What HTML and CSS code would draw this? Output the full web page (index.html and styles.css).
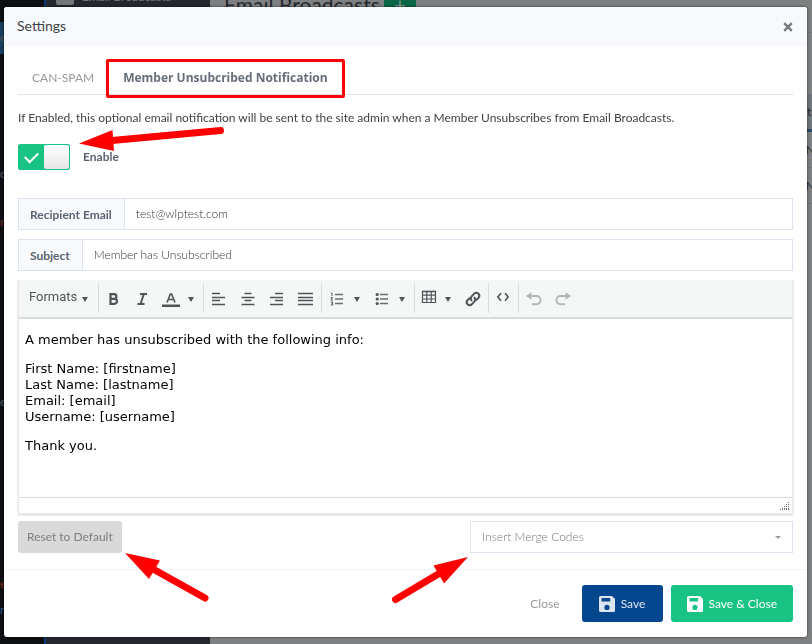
FILE: index.html
```html
<!DOCTYPE html>
<html lang="en">
<head>
<meta charset="utf-8">
<title>Settings</title>
<link rel="stylesheet" href="styles.css">
</head>
<body>
<div class="page" aria-hidden="true">
  <div class="rail">
    <div class="rail-item rail-active">e</div>
    <div class="rail-item rail-c">c</div>
    <div class="rail-item rail-m">m</div>
    <div class="rail-item rail-e">e</div>
    <div class="rail-item rail-red">e</div>
    <div class="rail-item rail-blue">m</div>
  </div>
  <div class="subnav"><span class="subnav-icon"></span><span>Email Broadcasts</span></div>
  <div class="main">
    <div class="page-head"><span>Email Broadcasts</span><span class="add">+</span></div>
    <div class="grid-head">tu</div>
    <div class="grid-row">N</div>
    <div class="grid-row">N</div>
  </div>
</div>

<div class="dialog" role="dialog" aria-labelledby="title">
  <header class="dialog-head">
    <h1 id="title">Settings</h1>
    <button class="close-x" type="button" aria-label="Close dialog"><svg width="10" height="10" viewBox="0 0 10 10"><path d="M1.2 1.2 8.8 8.8M8.8 1.2 1.2 8.8" stroke="#777b80" stroke-width="2.4"/></svg></button>
  </header>

  <div class="dialog-body">
    <nav class="tabs">
      <a class="tab" href="#can-spam">CAN-SPAM</a>
      <a class="tab tab-active" href="#unsubscribed">Member Unsubcribed Notification</a>
    </nav>
    <p class="intro">If Enabled, this optional email notification will be sent to the site admin when a Member Unsubscribes from Email Broadcasts.</p>

    <div class="toggle-row">
      <input class="toggle" type="checkbox" id="enable" checked>
      <label for="enable">Enable</label>
    </div>

    <div class="field"><label for="recipient">Recipient Email</label><input id="recipient" type="text" value="test@wlptest.com"></div>
    <div class="field"><label for="subject">Subject</label><input id="subject" type="text" value="Member has Unsubscribed"></div>

    <div class="editor">
      <div class="toolbar">
        <div class="group g-formats"><button type="button" class="formats">Formats <i class="caret"></i></button></div>
        <div class="group g-text">
          <button type="button" aria-label="Bold"><svg width="16" height="16" viewBox="0 0 16 16"><path d="M4.500 3.2h3.6a2.3 2.3 0 0 1 0 4.6H4.500zM4.500 7.8h4a2.5 2.5 0 0 1 0 5h-4z" fill="none" stroke="#515357" stroke-width="2.2"/></svg></button>
          <button type="button" aria-label="Italic"><svg width="16" height="16" viewBox="0 0 16 16"><path d="M6 3h7M3.5 13h7M9.8 3 6.600 13" fill="none" stroke="#515357" stroke-width="2"/></svg></button>
          <button type="button" aria-label="Text color"><svg width="18" height="16" viewBox="0 0 18 16"><path d="M5 11.500 8.4 3h1.2L13 11.500M6.3 8.500h5.4" fill="none" stroke="#515357" stroke-width="1.6"/><path d="M0 13.500h18V16H0z" fill="#515357"/></svg></button>
          <button type="button" class="drop" aria-label="Choose color"><i class="caret"></i></button>
        </div>
        <div class="group g-align">
          <button type="button" aria-label="Align left"><svg width="16" height="14" viewBox="0 0 16 14"><path d="M1 1.500h8M1 5.500h13M1 8.500h8M1 12.500h13" stroke="#515357" stroke-width="1.6"/></svg></button>
          <button type="button" aria-label="Align center"><svg width="16" height="14" viewBox="0 0 16 14"><path d="M4.500 1.500h7M1.500 5.500h13M4.500 8.500h7M1.500 12.500h13" stroke="#515357" stroke-width="1.6"/></svg></button>
          <button type="button" aria-label="Align right"><svg width="16" height="14" viewBox="0 0 16 14"><path d="M6 1.500h8M1 5.500h13M6 8.500h8M1 12.500h13" stroke="#515357" stroke-width="1.6"/></svg></button>
          <button type="button" aria-label="Justify"><svg width="16" height="14" viewBox="0 0 16 14"><path d="M0 1.500h15M0 5.500h15M0 8.500h15M0 12.500h15" stroke="#515357" stroke-width="1.6"/></svg></button>
        </div>
        <div class="group g-lists">
          <button type="button" aria-label="Numbered list"><svg width="14" height="14" viewBox="0 0 14 14"><path d="M5 2.5h8M5 7h8M5 11.5h8" stroke="#696b6f" stroke-width="1.3"/><path d="M1 1.2h1V4M.8 5.600h1.8L.8 8h2M.8 10h2l-1 1.4h1v1.5h-2" fill="none" stroke="#515357"/></svg></button>
          <button type="button" class="drop" aria-label="Number styles"><i class="caret"></i></button>
          <button type="button" aria-label="Bullet list"><svg width="14" height="14" viewBox="0 0 14 14"><path d="M5 2.5h8M5 7h8M5 11.5h8" stroke="#696b6f" stroke-width="1.3"/><circle cx="2.2" cy="2.5" r="1.6" fill="#515357"/><circle cx="2.2" cy="7" r="1.6" fill="#515357"/><circle cx="2.2" cy="11.5" r="1.6" fill="#515357"/></svg></button>
          <button type="button" class="drop" aria-label="Bullet styles"><i class="caret"></i></button>
        </div>
        <div class="group g-table">
          <button type="button" class="high" aria-label="Table"><svg width="16" height="14" viewBox="0 0 16 14"><path d="M1.5 1.5h13v11h-13zM1.5 5.2h13M1.5 9h13M5.800 1v12M10.2 1v12" fill="none" stroke="#515357" stroke-width="1.2"/><path d="M1 1.5h14" stroke="#515357" stroke-width="1.6"/></svg></button>
          <button type="button" class="drop" aria-label="Table options"><i class="caret"></i></button>
          <button type="button" aria-label="Link"><svg width="18" height="18" viewBox="0 0 18 18"><g fill="none" stroke="#515357" stroke-width="2" stroke-linecap="round"><path d="M7.600 10.4a2.8 2.8 0 0 1 0-4l2.900-3a3 3 0 0 1 4.200 4.200l-2.200 2.200"/><path d="M10.4 7.600a2.800 2.800 0 0 1 0 4l-2.900 3a3 3 0 0 1-4.200-4.200l2.200-2.200"/></g></svg></button>
        </div>
        <div class="group g-code"><button type="button" class="high" aria-label="Source code"><svg width="14" height="10" viewBox="0 0 14 10"><path d="M5 1.2 1.8 5 5 8.8M9 1.2 12.2 5 9 8.8" fill="none" stroke="#515357" stroke-width="1.6"/></svg></button></div>
        <div class="group">
          <button type="button" aria-label="Undo" disabled><svg width="16" height="14" viewBox="0 0 16 14"><path d="M3 4h7.5a4 4 0 0 1 0 8.2H6" fill="none" stroke="#b3b5b6" stroke-width="1.9"/><path d="M0 4 5.5.2v7.6z" fill="#b3b5b6"/></svg></button>
          <button type="button" aria-label="Redo" disabled><svg width="16" height="14" viewBox="0 0 16 14"><path d="M13 4H5.5a4 4 0 0 0 0 8.2H10" fill="none" stroke="#b3b5b6" stroke-width="1.9"/><path d="M16 4 10.5.2v7.6z" fill="#b3b5b6"/></svg></button>
        </div>
      </div>
      <div class="content" contenteditable="true" role="textbox" aria-label="Message" spellcheck="false">
        <p>A member has unsubscribed with the following info:</p>
        <p>First Name: [firstname]<br>Last Name: [lastname]<br>Email: [email]<br>Username: [username]</p>
        <p>Thank you.</p>
      </div>
      <div class="statusbar"><svg width="10" height="10" viewBox="0 0 10 10" fill="#6c6e70"><path d="M8 1h1v1H8zM6 3h1v1H6zM8 3h1v1H8zM4 5h1v1H4zM6 5h1v1H6zM8 5h1v1H8zM2 7h1v2H2zM4 7h1v2H4zM6 7h1v2H6zM8 7h1v2H8zM0 8h1v1H0z"/></svg></div>
    </div>

    <div class="under">
      <button type="button" class="btn reset">Reset to Default</button>
      <div class="merge"><select aria-label="Merge codes"><option>Insert Merge Codes</option></select></div>
    </div>
  </div>

  <footer class="dialog-foot">
    <button type="button" class="btn plain">Close</button>
    <button type="button" class="btn save"><svg width="16" height="16" viewBox="0 0 16 16"><path fill-rule="evenodd" d="M1.500 0h11.500L16 3v11.500a1.500 1.500 0 0 1-1.500 1.500h-13A1.500 1.500 0 0 1 0 14.500v-13A1.500 1.500 0 0 1 1.500 0zM2.500 2v3.400h8.700V2zM8 8.800a2.600 2.600 0 1 0 0 5.200 2.600 2.600 0 0 0 0-5.200z" fill="#dde5f0"/></svg>Save</button>
    <button type="button" class="btn save-close"><svg width="16" height="16" viewBox="0 0 16 16"><path fill-rule="evenodd" d="M1.500 0h11.500L16 3v11.500a1.500 1.500 0 0 1-1.500 1.500h-13A1.500 1.500 0 0 1 0 14.500v-13A1.500 1.500 0 0 1 1.500 0zM2.500 2v3.400h8.700V2zM8 8.800a2.600 2.600 0 1 0 0 5.200 2.600 2.600 0 0 0 0-5.200z" fill="#fff"/></svg>Save &amp; Close</button>
  </footer>
</div>

<svg class="arrows" width="812" height="644" viewBox="0 0 812 644" aria-hidden="true">
  <g stroke="#f00" stroke-width="7" stroke-linecap="round"><path d="M220.500 130.500 112 140.500"/><path d="M205 598 153 569"/><path d="M395.500 599.500 440 573"/></g>
  <g fill="#f00"><path d="M79 143.500 112.500 130l1.500 21z"/><path d="M125 553l35 7.500-11 18.500z"/><path d="M468 557l-34.500 8.500 10.500 18z"/></g>
</svg>
</body>
</html>
```

FILE: styles.css
```css
* { box-sizing: border-box; }
body {
  margin: 0;
  min-height: 100vh;
  overflow: hidden;
  background: #7f8081;
  color: #3f4348;
  font: 12px/16px Lato, "Liberation Sans", sans-serif;
}
button, input, select { font: inherit; color: inherit; }
svg { display: block; flex: none; }

/* Dimmed page behind the dialog */
.page { position: fixed; inset: 0; display: flex; overflow: hidden; }
.rail { width: 44px; background: #0d0f12; color: #555b60; }
.rail-item { height: 32px; line-height: 32px; }
.rail-active { margin-top: 22px; background: #1a3f60; }
.rail-c { margin-top: 104px; }
.rail-m { margin-top: 16px; color: #7a2a20; }
.rail-e { margin-top: 148px; }
.rail-red { margin-top: 150px; margin-bottom: -6px; color: #8a2a1a; }
.rail-blue { color: #2a5f8a; }
.subnav { display: flex; gap: 8px; width: 166px; padding-left: 10px; border-left: 2px solid #0d3a78; background: #24282e; color: #747779; }
.subnav > span { margin-top: -11px; }
.subnav-icon { width: 18px; height: 16px; border-radius: 2px; background: #747779; }
.main { flex: 1; background: #7f8081; color: #24282e; text-align: right; }
.page-head { display: flex; gap: 4px; height: 33px; padding-left: 14px; border-bottom: 1px solid #6f7780; font-size: 21px; line-height: 10px; }
.page-head span { white-space: nowrap; }
.add { width: 32px; height: 16px; color: #7f8f88; background: #0a6645; text-align: center; }
.grid-head, .grid-row { height: 36px; line-height: 36px; border-bottom: 1px solid #6f7780; }
.grid-head { height: 38px; margin: 61px -6px 0 0; border-bottom: 3px solid #2c4a66; background: #70767d; }
.grid-row { margin-right: -3px; }

/* Dialog */
.dialog {
  position: relative;
  margin: 7px 5px 7px 4px;
  border-radius: 3px;
  background: #fff;
  box-shadow: 0 0 3px rgba(0, 0, 0, .6);
  overflow: hidden;
}
.dialog-head { display: flex; align-items: center; justify-content: space-between; height: 39px; padding: 0 14px 0 13px; background: #f7f9fc; }
.dialog-head h1 { margin: 0; font-size: 14px; font-weight: 400; line-height: 18px; padding-bottom: 2px; }
.close-x { padding: 0; border: 0; background: none; }
.dialog-body { padding: 14px 14px 16px; }

.tabs { display: flex; height: 35px; border-bottom: 1px solid #dbe3ee; line-height: 36px; }
.tab { padding: 0 14px; color: #999; text-decoration: none; white-space: nowrap; }
.tab-active { position: relative; padding: 0 15px; color: #666e79; font-family: "Open Sans", sans-serif; font-weight: 700; }
.tab-active::after { content: ""; position: absolute; inset: -1px -2px -4px -2px; border: 3px solid #f00; border-radius: 2px; }
.intro { margin: 15px 0 18px; }

.toggle-row { display: flex; align-items: center; gap: 13px; margin-bottom: 28px; color: #5b6470; font-weight: 700; }
.toggle {
  appearance: none;
  position: relative;
  width: 52px;
  height: 26px;
  margin: 0;
  border: 1px solid #19c384;
  border-radius: 2px;
  background: #19c384;
}
.toggle::before { content: ""; position: absolute; left: 6px; top: 7px; width: 11px; height: 6px; border: solid #fff; border-width: 0 0 2px 2px; transform: rotate(-45deg); }
.toggle::after { content: ""; position: absolute; right: 0; top: 0; width: 25px; height: 24px; border-radius: 2px; background: linear-gradient(#fff, #e6e6e6); }

.field { display: flex; height: 32px; margin-bottom: 9px; border: 1px solid #dbe3ee; }
.field label { padding: 0 12px 0 11px; border-right: 1px solid #dbe3ee; background: #f7f9fc; color: #5b6470; font-weight: 700; line-height: 31px; }
.field input { flex: 1; min-width: 0; padding: 0 11px; border: 0; outline: 0; background: none; color: #303438; font-weight: 300; }

/* Rich text editor */
.editor { border: 1px solid #e7e9ea; border-top: 0; box-shadow: 0 1px 2px rgba(0, 0, 0, .18); }
.toolbar { display: flex; height: 39px; padding: 3px 0 4px; border-bottom: 2px solid #d9dcdc; background: #f5f7f7; }
.group { display: flex; align-items: center; gap: 13px; padding: 2px 7px 0; border-right: 1px solid #d9dcdc; }
.group:last-child { border: 0; }
.toolbar button { display: flex; align-items: center; justify-content: center; padding: 0; border: 0; background: none; color: #515357; }
.toolbar .high { margin-bottom: 4px; }
.g-formats { width: 80px; padding: 0 10px 2px; }
.toolbar .formats { gap: 5px; font: 13px/16px Roboto, sans-serif; }
.g-text { gap: 12px; padding-right: 9px; }
.g-text .drop { margin-left: -4px; }
.g-lists .drop, .g-table .drop { margin-left: -5px; }
.caret { border: solid transparent; border-width: 5px 3px 0; border-top-color: #515357; }
.formats .caret { margin-top: 5px; }
.g-lists { gap: 15px; padding: 2px 9px 0 8px; }
.g-table { gap: 13px; padding: 2px 7px 0 6px; }
.g-code { padding: 2px 8px 0 7px; }
.g-table { padding-right: 6px; }
.content { height: 178px; padding: 13px 6px; outline: 0; color: #000; font: 13px/16px "DejaVu Sans", sans-serif; }
.content p { margin: 0 0 13px; }
.statusbar { display: flex; align-items: flex-end; justify-content: flex-end; height: 16px; padding: 0 2px 2px; border-top: 1px solid #d9dcdc; }

.under { display: flex; justify-content: space-between; gap: 16px; margin-top: 7px; }
.btn { display: flex; align-items: center; justify-content: center; border: 0; border-radius: 3px; white-space: nowrap; }
.reset { height: 32px; padding: 0 9px; background: #d9d9d9; color: #7c7e80; }
.merge { position: relative; width: 42%; max-width: 323px; }
.merge select { appearance: none; width: 100%; height: 32px; padding: 0 11px; border: 1px solid #dbe3ee; border-radius: 0; background: #fff; color: #777; font-weight: 300; }
.merge::after { content: ""; position: absolute; right: 12px; top: 15px; border: solid transparent; border-width: 3px 3px 0; border-top-color: #999; }

.dialog-foot { display: flex; align-items: center; justify-content: flex-end; gap: 8px; padding: 15px 14px; border-top: 1px solid #f2f3f5; }
.dialog-foot .btn { height: 37px; gap: 6px; padding: 0 16px; }
.dialog-foot .plain { padding: 0 14px; background: none; color: #999; }
.dialog-foot .save { min-width: 81px; background: #05478f; color: #dde5f0; }
.dialog-foot .save-close { min-width: 122px; background: #19c384; color: #fff; }

.arrows { position: absolute; left: 0; top: 0; pointer-events: none; }
```
